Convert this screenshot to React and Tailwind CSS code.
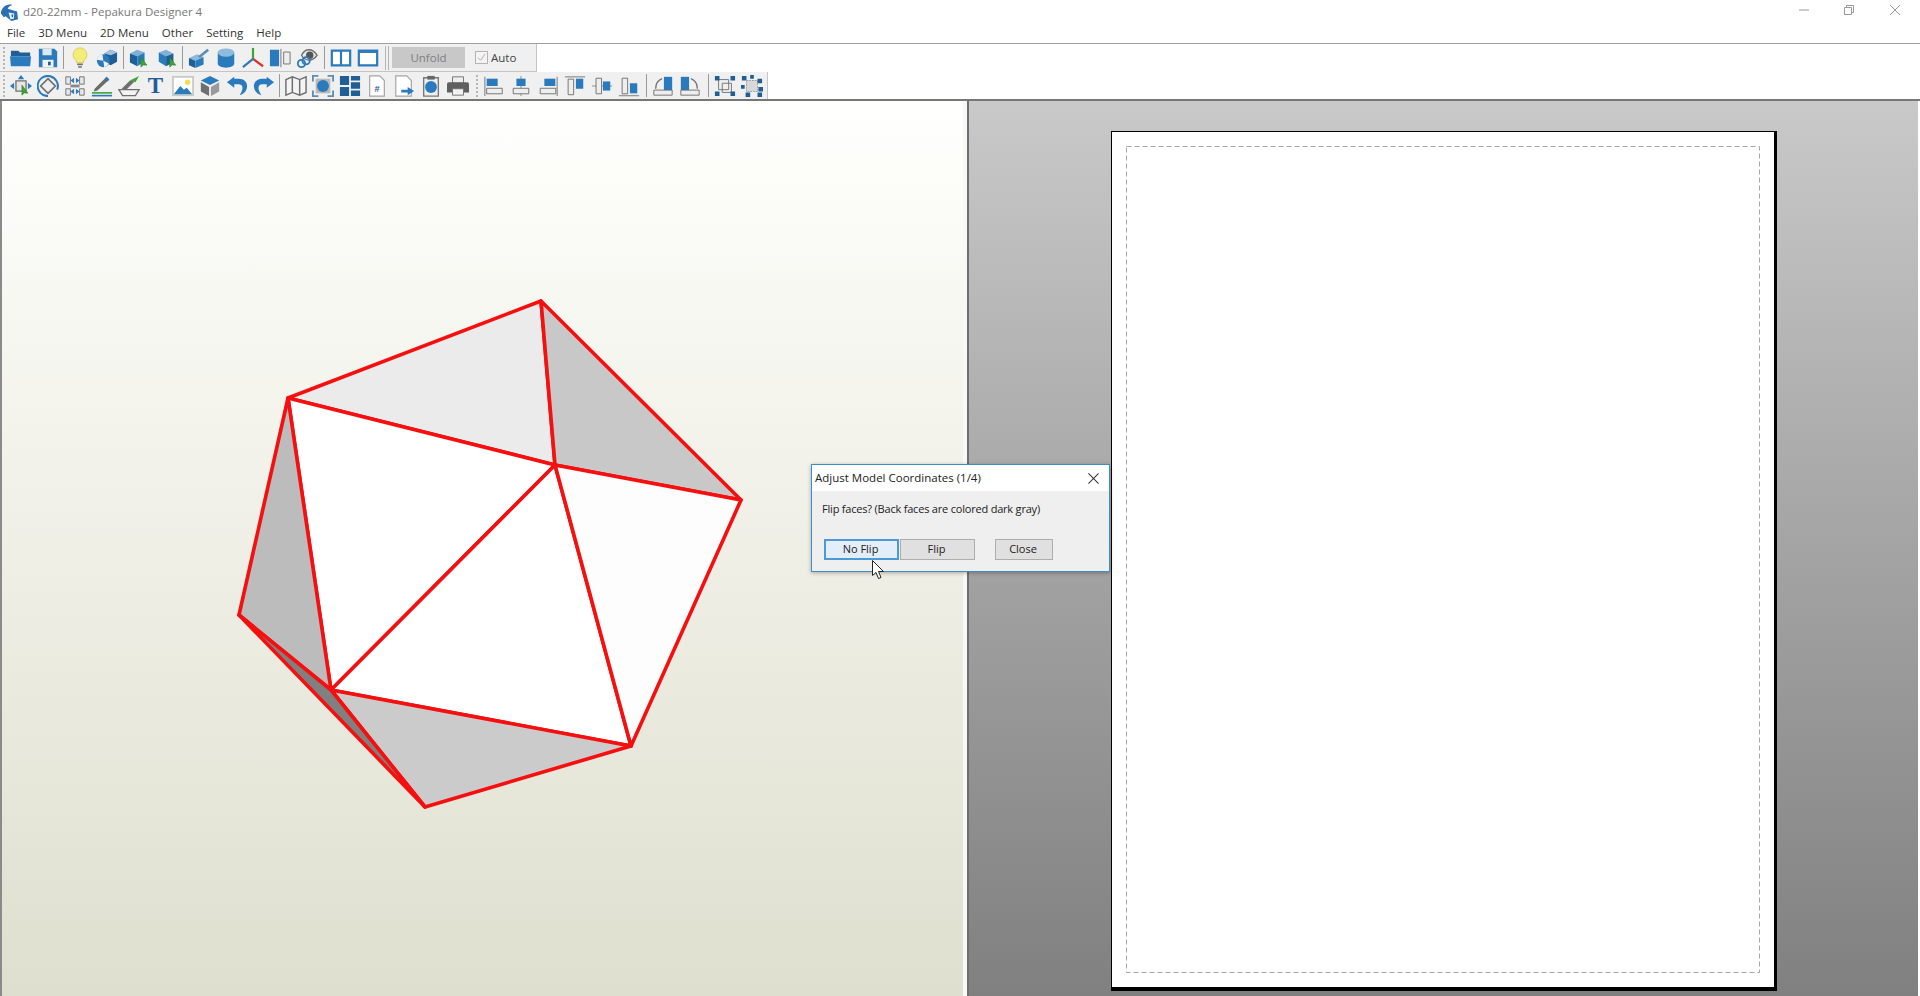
import React from 'react';

const BLUE = '#2a7bbd';
const DARK = '#1f5f96';
const GRAY = '#6f6f6f';
const GREEN = '#3fa535';

const Cursor = ({ x = 14, y = 12 }) => (
  <path d={`M${x} ${y}l0 11 2.6-2.4 4 .2z`} fill={GREEN} stroke="#1d6b1a" strokeWidth=".5" />
);

const Cube = ({ flip }) => (
  <g transform={flip ? 'translate(20 0) scale(-1 1)' : undefined}>
    <path d="M1 7l8-4 8 3-8 4z" fill="#7fb0d6" />
    <path d="M1 7l8 3v11l-8-4z" fill={DARK} />
    <path d="M9 10l8-4v10l-8 5z" fill={BLUE} />
  </g>
);

const icons = {
  folder: <><path d="M1 4h8l2 2h11v4H1z" fill={DARK} /><path d="M0 10h23l-1 11H1z" fill={BLUE} /></>,
  save: <><path d="M2 2h17l3 3v17H2z" fill={BLUE} /><path d="M6 2h10v7H6z" fill="#dbe9f4" /><path d="M6 14h12v8H6z" fill="#f2f2f2" /><path d="M12 16h3v4h-3z" fill={DARK} /></>,
  bulb: <><path d="M12 1a7.500 7.500 0 0 1 4 13.800V17H8v-2.200A7.500 7.500 0 0 1 12 1z" fill="#f3ec78" stroke="#d8cc55" /><path d="M9 18h6v2H9zM10 21h4v1.500h-4z" fill={GRAY} /></>,
  cubeBall: <><path d="M9 7l7-4 7 3v10l-7 4-4-2z" fill={DARK} /><path d="M9 7l7-4 7 3-7 3z" fill="#9dc3df" /><circle cx="8" cy="15" r="7" fill={BLUE} /><path d="M8 15l-7-1a7 7 0 0 1 6-6zM8 15l6 3a7 7 0 0 1-5 4z" fill="#f0f0f0" /></>,
  cubeA: <><g transform="translate(0 0)"><Cube /></g><Cursor x={13} y={11} /></>,
  cubeB: <><g transform="translate(0 0)"><Cube flip /></g><Cursor x={15} y={11} /></>,
  cubePen: <><path d="M1 12l9-4 7 3-9 4z" fill="#8db9da" /><path d="M1 12l7 3v8l-7-3z" fill={DARK} /><path d="M8 15l9-4v8l-9 4z" fill={BLUE} /><path d="M11 10l10-8 2 2-10 8z" fill="#5d8fb8" /></>,
  cylinder: <><path d="M3 6v12c0 6 18 6 18 0V6z" fill={BLUE} /><ellipse cx="12" cy="6" rx="9" ry="4.500" fill="#8fbcdd" /></>,
  axes: <><path d="M12 13V1" stroke={GREEN} strokeWidth="2.400" /><path d="M12 13l11 8" stroke="#d9352c" strokeWidth="2.400" /><path d="M12 13L1 22" stroke={BLUE} strokeWidth="2.400" /></>,
  mirror: <><path d="M1 3h10v18H1z" fill={BLUE} /><path d="M13 2v20" stroke={GRAY} /><path d="M16 5.500h7v13h-7z" fill="#eee" stroke={GRAY} /></>,
  eye: <><path d="M6 9c4-8 12-8 17 0-5 7-13 7-17 0z" fill="#e8e8e8" stroke={GRAY} strokeWidth="1.500" /><circle cx="15" cy="9" r="4" fill="#555" /><circle cx="6" cy="18" r="4" fill="none" stroke={BLUE} strokeWidth="2" /><circle cx="11" cy="15" r="4" fill="none" stroke={BLUE} strokeWidth="2" /></>,
  panes: <><path d="M2 4h20v16H2z" fill="#fff" stroke={BLUE} strokeWidth="2.400" /><path d="M12 4v16" stroke={BLUE} strokeWidth="2.400" /></>,
  pane: <><path d="M2 4h20v16H2z" fill="#fff" stroke={BLUE} strokeWidth="2.400" /><path d="M2 5h20" stroke={BLUE} strokeWidth="3" /></>,
  moveSel: <><path d="M6.500 6.500h11v11h-11z" fill="#e6e6e6" stroke={GRAY} strokeWidth="1.400" /><path d="M12 0l3.500 4.500h-7zM0 12l4.500-3.500v7zM24 12l-4.500-3.500v7z" fill={BLUE} /><Cursor x={13} y={11} /></>,
  rotate: <><path d="M12 4l8 8-8 8-8-8z" fill="#eee" stroke={GRAY} strokeWidth="1.800" /><path d="M22 16A11 11 0 1 0 12 23" fill="none" stroke={BLUE} strokeWidth="2.200" /></>,
  joinEdges: <><path d="M2 2h5v8H2zM17 2h5v8h-5zM2 15h5v7H2zM17 15h5v7h-5z" fill="#e8e8e8" stroke={GRAY} /><path d="M7 12h10" stroke="#888" strokeWidth="3" /><path d="M7 6l4-3v6zM17 6l-4-3v6zM7 18l4-3v6zM17 18l-4-3v6z" fill={BLUE} /></>,
  penLine: <><path d="M4 15L17 2l3 3L7 17l-4 1z" fill="#6b6b6b" /><path d="M17 2l3 3-2 2-3-3z" fill={BLUE} /><path d="M1 19.500h22" stroke={GREEN} strokeWidth="1.800" /><path d="M1 22.500h22" stroke={BLUE} strokeWidth="1.800" /></>,
  penTray: <><path d="M4 15l9-9 5 1-9 9z" fill={GRAY} /><path d="M13 6l10-5-4 7z" fill={GREEN} /><path d="M1 16h22l-4 6.500H5z" fill="#f3f3f3" stroke={GRAY} strokeWidth="1.400" /></>,
  image: <><path d="M0 1h24v22H0z" fill="#c9c9c9" /><path d="M2 3h20v18H2z" fill="#fff" /><path d="M2 21l7-9 4 4 3-2 6 7z" fill={BLUE} /><circle cx="17" cy="8" r="3" fill="#f0de55" /></>,
  box3d: <><path d="M12 1l10 5-10 5L2 6z" fill={BLUE} /><path d="M2 8l9 5v10l-9-5z" fill={GRAY} /><path d="M22 8l-9 5v10l9-5z" fill="#9a9a9a" /></>,
  undo: <path d="M9 2L1 8l8 6v-4h5c4 0 5 4 3 8l-2 4c6-2 8-6 8-10 0-5-4-8-9-8H9z" fill={BLUE} />,
  redo: <path d="M15 2l8 6-8 6v-4h-5c-4 0-5 4-3 8l2 4c-6-2-8-6-8-10 0-5 4-8 9-8h5z" fill={BLUE} />,
  map: <path d="M1 5l7-3 8 3 7-3v17l-7 3-8-3-7 3zM8 2v17M16 5v17" fill="#f4f4f4" stroke={GRAY} strokeWidth="1.600" />,
  fitView: <><path d="M4 4h16v16H4z" fill="#b9b9b9" /><circle cx="12" cy="12" r="6.500" fill={BLUE} /><path d="M1 7V1h6M17 1h6v6M1 17v6h6M17 23h6v-6" fill="none" stroke="#5b8db5" strokeWidth="2" /></>,
  tiles: <path d="M1 1h10v10H1zM1 13h10v10H1zM13 1h10v5H13zM13 8h10v7H13zM13 17h10v6H13z" fill={DARK} />,
  pageNum: <><path d="M4 1h11l5 5v17H4z" fill="#fff" stroke="#a5a5a5" strokeWidth="1.300" /><text x="12" y="19" textAnchor="middle" fontFamily="Liberation Sans, sans-serif" fontWeight="700" fontSize="10" fill={DARK}>#</text></>,
  pageOut: <><path d="M3 1h12l5 5v17H3z" fill="#fff" stroke="#a5a5a5" strokeWidth="1.300" /><path d="M9 16h7v-3l7 4.500-7 4.500v-3H9z" fill={BLUE} /></>,
  clip: <><path d="M4 3h16v20H4z" fill="#efefef" stroke="#777" strokeWidth="1.500" /><path d="M8 1h8v4H8z" fill="#666" /><circle cx="12" cy="13" r="6.500" fill={BLUE} /></>,
  print: <><path d="M6 2h12v7H6z" fill="#eee" stroke={GRAY} /><path d="M0 10a2 2 0 0 1 2-2h20a2 2 0 0 1 2 2v9H0z" fill="#5f5f5f" /><path d="M6 15h12v7H6z" fill="#f2f2f2" stroke={GRAY} /></>,
  alignL: <><path d="M2 2v21" stroke="#999" strokeWidth="1.500" /><path d="M4 4h12v8H4z" fill={BLUE} /><path d="M4 14.500h17v6H4z" fill="#eee" stroke={GRAY} /></>,
  alignC: <><path d="M12 1v22" stroke="#888" /><path d="M7 4h10v8H7z" fill={BLUE} /><path d="M3.500 14.500h17v6h-17z" fill="#eee" stroke={GRAY} /></>,
  alignR: <><path d="M22 2v21" stroke="#999" strokeWidth="1.500" /><path d="M8 4h12v8H8z" fill={BLUE} /><path d="M3.500 14.500h17v6h-17z" fill="#eee" stroke={GRAY} /></>,
  alignT: <><path d="M1 2h22" stroke="#999" strokeWidth="1.500" /><path d="M4.500 4.500h6v17h-6z" fill="#eee" stroke={GRAY} /><path d="M13 4h8v11h-8z" fill={BLUE} /></>,
  alignM: <><path d="M1 12h22" stroke="#888" /><path d="M5.500 3.500h6v17h-6z" fill="#eee" stroke={GRAY} /><path d="M13 7h8v10h-8z" fill={BLUE} /></>,
  alignB: <><path d="M1 22.500h22" stroke="#999" strokeWidth="1.500" /><path d="M4.500 3.500h6v17h-6z" fill="#eee" stroke={GRAY} /><path d="M13 9h8v11h-8z" fill={BLUE} /></>,
  turnL: <><path d="M13 2h9v15h-9z" fill={BLUE} /><path d="M2 16.500h20v5.500H2z" fill="#eee" stroke={GRAY} /><path d="M11 4C6 6 4 9 4 15" fill="none" stroke={GRAY} strokeWidth="1.400" /></>,
  turnR: <><path d="M2 2h9v15H2z" fill={BLUE} /><path d="M2 16.500h20v5.500H2z" fill="#eee" stroke={GRAY} /><path d="M13 4c5 2 7 5 7 11" fill="none" stroke={GRAY} strokeWidth="1.400" /></>,
  group: <><path d="M5 5h11v11H5zM9 9h10v10H9z" fill="none" stroke={GRAY} /><path d="M1 1h5v5H1zM18 1h5v5h-5zM1 18h5v5H1zM18 18h5v5h-5z" fill={DARK} /></>,
  ungroup: <><path d="M6 6h12v12H6z" fill="#d8d8d8" stroke="#999" strokeDasharray="2 1" /><path d="M1 1h5v5H1zM10 0h4v4h-4zM18 4h5v5h-5zM0 11h4v4H0zM19 13h5v5h-5zM5 19h5v5H5zM18 19h5v5h-5z" fill={DARK} /></>,
};

const row1 = [
  ['folder', 'save'],
  ['bulb', 'cubeBall'],
  ['cubeA', 'cubeB'],
  ['cubePen', 'cylinder', 'axes', 'mirror', 'eye'],
  ['panes', 'pane'],
];

const row2 = [
  ['moveSel', 'rotate', 'joinEdges', 'penLine', 'penTray', 'text', 'image', 'box3d', 'undo', 'redo'],
  ['map', 'fitView', 'tiles', 'pageNum', 'pageOut', 'clip', 'print'],
];

const row2b = [
  ['alignL', 'alignC', 'alignR', 'alignT', 'alignM', 'alignB'],
  ['turnL', 'turnR'],
  ['group', 'ungroup'],
];

const ToolIcon = ({ name }) => (
  <div className="w-[27px] h-[26px] flex items-center justify-center">
    {name === 'text' ? (
      <span className="text-[23px] leading-[24px] font-bold text-[#1f5f96] font-['Liberation_Serif',serif]">T</span>
    ) : (
      <svg viewBox="0 0 24 24" className="w-[22px] h-[22px]">{icons[name]}</svg>
    )}
  </div>
);

const Grip = () => (
  <div className="w-[7px] h-[24px] flex flex-col justify-between items-center py-[1px]">
    {[0, 1, 2, 3, 4, 5].map(i => <span key={i} className="w-[2px] h-[2px] bg-[#b5b5b5]" />)}
  </div>
);

const Sep = () => <div className="w-[1px] h-[23px] bg-[#9a9a9a] mx-[2px]" />;

const Group = ({ groups, gaps = [] }) => (
  <>
    {groups.map((g, i) => (
      <React.Fragment key={i}>
        {i > 0 && <div className={gaps[i]}><Sep /></div>}
        {g.map(n => <ToolIcon key={n} name={n} />)}
      </React.Fragment>
    ))}
  </>
);

const Model = () => {
  const A = '541,301', B = '288,398', C = '555,465', D = '741,500';
  const E = '239,615', F = '331,690', G = '631,746', H = '425,807';
  const faces = [
    [[B, A, C], '#ebebeb'],
    [[A, D, C], '#c8c8c8'],
    [[B, C, F], '#ffffff'],
    [[C, G, F], '#ffffff'],
    [[C, D, G], '#fdfdfd'],
    [[B, E, F], '#bcbcbc'],
    [[F, G, H], '#cbcbcb'],
    [[E, F, H], '#808080'],
  ];
  return (
    <svg viewBox="2 101 961 895" className="w-full h-full block">
      {faces.map(([pts, fill], i) => (
        <polygon key={i} points={pts.join(' ')} fill={fill} stroke="#f50f0f" strokeWidth="3.600" strokeLinejoin="round" />
      ))}
    </svg>
  );
};

const App = () => (
  <div className="relative w-[1920px] h-[996px] overflow-hidden flex flex-col bg-white text-[11.5px] font-['Open_Sans','Noto_Sans',sans-serif] text-[#222]">
    <div className="h-[24px] flex items-center">
      <svg viewBox="0 0 20 20" className="w-[19px] h-[19px]">
        <path d="M1 11C1 5 7 0 13 2c-3 1-4 2-5 4l10 3 1 8-7 2-6-5-2 1z" fill="#2a6fb0" />
        <path d="M9 10l6 1-.5 5.500L11 17z" fill="#e8f0f7" />
        <path d="M12 12l2 0-.5 3-1 0z" fill="#1f5f96" />
      </svg>
      <span className="ml-[4px] text-[#777]">d20-22mm - Pepakura Designer 4</span>
      <div className="ml-auto self-start pt-[5px] flex items-center pr-[20px] text-[#999]">
        <svg viewBox="0 0 10 10" className="w-[10px] h-[10px] mr-[35px]"><path d="M0 5h10" stroke="currentColor" /></svg>
        <svg viewBox="0 0 10 10" className="w-[10px] h-[10px] mr-[36px]"><path d="M.5 2.500h7v7h-7zM2.500 2.500v-2h7v7h-2" fill="none" stroke="currentColor" /></svg>
        <svg viewBox="0 0 10 10" className="w-[10px] h-[10px]"><path d="M0 0l10 10M10 0L0 10" stroke="currentColor" /></svg>
      </div>
    </div>

    <div className="h-[19px] pb-[2px] flex items-center gap-[13px] pl-[7px] text-[#333]">
      {['File', '3D Menu', '2D Menu', 'Other', 'Setting', 'Help'].map(m => <span key={m}>{m}</span>)}
    </div>

    <div className="border-t border-[#a0a0a0]">
      <div className="w-[537px] h-[28px] bg-[#f0f0f0] border-r border-b border-[#c4c4c4] flex items-center">
        <Grip />
        <Group groups={row1} gaps={['', '', 'ml-[1px]', '', 'ml-[2px]']} />
        <div className="w-[4px] h-[24px] border-x border-[#b5b5b5] ml-[4px] mr-[3px]" />
        <div className="w-[73px] h-[21px] bg-[#c8c8c8] flex items-center justify-center text-[#808080]">Unfold</div>
        <div className="ml-[10px] w-[13px] h-[13px] border border-[#b4b4b4] bg-[#f4f4f4] flex items-center justify-center">
          <svg viewBox="0 0 12 12" className="w-[11px] h-[11px]"><path d="M2 6l3 3 5-7" fill="none" stroke="#aaa" /></svg>
        </div>
        <span className="ml-[3px] text-[#444]">Auto</span>
      </div>
      <div className="w-[768px] h-[27px] bg-[#f0f0f0] border-r border-[#c4c4c4] flex items-center">
        <Grip />
        <Group groups={row2} />
        <div className="ml-[2px]"><Grip /></div>
        <Group groups={row2b} gaps={['', 'ml-[2px]', 'ml-[3px]']} />
      </div>
    </div>

    <div className="flex-1 flex min-h-0 border-t-2 border-[#777]">
      <div className="w-[963px] border-l-2 border-[#8a8a8a] bg-gradient-to-b from-[#fffffd] to-[#dfdfcf]">
        <Model />
      </div>
      <div className="w-[4px] bg-[#f8f8f8]" />
      <div className="w-[953px] border-l-2 border-r-2 border-r-white border-l-[#6e6e6e] bg-gradient-to-b from-[#c9c9c9] to-[#808080] pl-[142px] pt-[30px]">
        <div className="w-[666px] h-[860px] bg-white border-t border-l border-r-[3px] border-b-4 border-black p-[14px]">
          <svg className="w-full h-full block">
            <rect x=".5" y=".5" width="633" height="826" fill="none" stroke="#a6a6a6" strokeDasharray="5 3" />
          </svg>
        </div>
      </div>
    </div>

    {/* dialog floats over the panels */}
    <div className="absolute left-[811px] top-[464px] w-[299px] h-[108px] bg-[#efefef] border border-[#3f8cc7] shadow-[0_1px_4px_rgba(0,0,0,0.3)]">
      <div className="h-[26px] bg-white flex items-center pl-[3px] pr-[10px] text-[#222]">
        <span>Adjust Model Coordinates (1/4)</span>
        <svg viewBox="0 0 12 12" className="ml-auto w-[11px] h-[11px]"><path d="M.5 .5l11 11M11.500 .5l-11 11" stroke="#333" strokeWidth="1.100" /></svg>
      </div>
      <div className="pl-[10px] pt-[10px] text-[11px] tracking-[-0.2px] leading-[16px] text-[#222]">Flip faces? (Back faces are colored dark gray)</div>
      <div className="flex items-center pl-[12px] mt-[22px] text-[11px]">
        <div className="w-[75px] h-[21px] pr-[2px] flex items-center justify-center bg-[#e3eef9] border-2 border-[#4a9ad6]">No Flip</div>
        <div className="w-[75px] h-[21px] pr-[2px] ml-[1px] flex items-center justify-center bg-[#e0e0e0] border border-[#adadad]">Flip</div>
        <div className="w-[58px] h-[21px] pr-[2px] ml-[20px] flex items-center justify-center bg-[#e0e0e0] border border-[#adadad]">Close</div>
      </div>
    </div>

    <svg viewBox="0 0 13 20" className="absolute left-[872px] top-[560px] w-[13px] h-[20px]">
      <path d="M.5 .5v15l3.500-3 2.500 6 2.500-1-2.500-6h5z" fill="#fff" stroke="#222" />
    </svg>
  </div>
);

export default App;
